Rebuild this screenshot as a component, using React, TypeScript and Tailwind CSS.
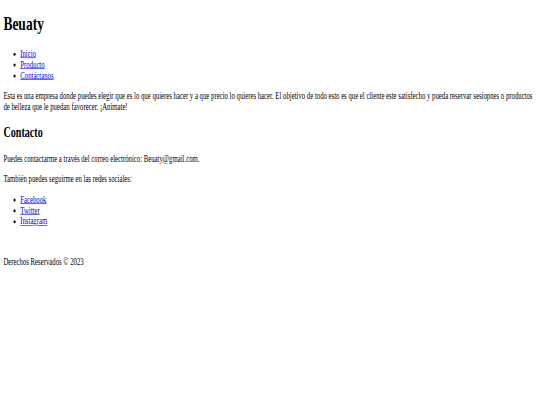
import React from "react";

const navLinks = ["Inicio", "Producto", "Contáctanos"];
const socialLinks = ["Facebook", "Twitter", "Instagram"];

export default function App() {
  return (
    <div className="w-[540px] h-[405px] overflow-hidden bg-white">
      <div
        className="w-[1280px] origin-top-left scale-x-[0.421875] scale-y-[0.605] px-2 pt-px text-[16px] leading-[normal] text-black"
        style={{ fontFamily: '"Liberation Serif", "Times New Roman", serif' }}
      >
        <header>
          <h1 className="text-[32px] font-bold mt-[20.44px] mb-[21.44px]">Beuaty</h1>
          <nav>
            <ul className="list-disc pl-10 my-4">
              {navLinks.map((l) => (
                <li key={l}>
                  <a href="#" className="text-[#0000ee] underline">
                    {l}
                  </a>
                </li>
              ))}
            </ul>
          </nav>
        </header>
        <main>
          <p className="my-4">
            Esta es una empresa donde puedes elegir que es lo que quieres hacer y a que precio lo quieres hacer. El
            objetivo de todo esto es que el cliente este satisfecho y pueda reservar sesiopnes o productos de belleza
            que le puedan favorecer. ¡Animate!
          </p>
          <section>
            <h2 className="text-[24px] font-bold my-[19.92px]">Contacto</h2>
            <p className="my-4">Puedes contactarme a través del correo electrónico: Beuaty@gmail.com.</p>
            <p className="my-4">También puedes seguirme en las redes sociales:</p>
            <ul className="list-disc pl-10 my-4">
              {socialLinks.map((l) => (
                <li key={l}>
                  <a href="#" className="text-[#0000ee] underline">
                    {l}
                  </a>
                </li>
              ))}
            </ul>
          </section>
        </main>
        <footer>
          <p className="mt-[49px] mb-4">Derechos Reservados © 2023</p>
        </footer>
      </div>
    </div>
  );
}
